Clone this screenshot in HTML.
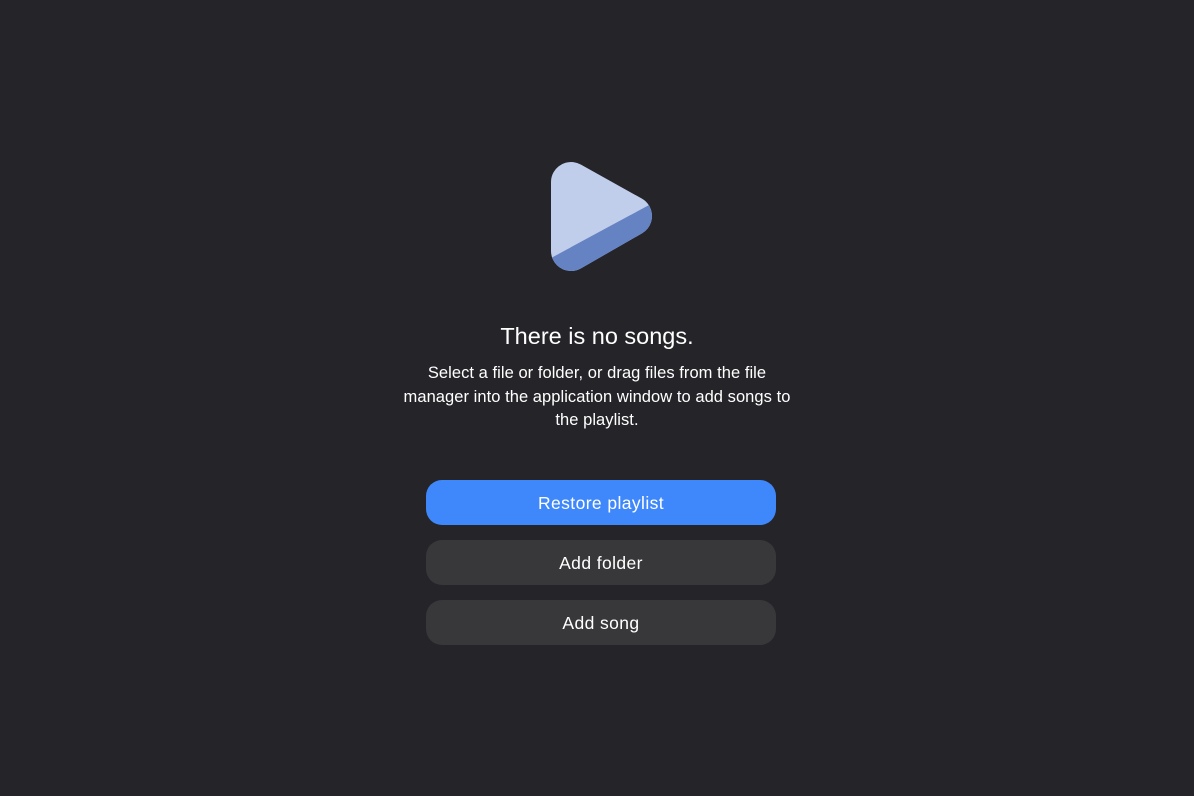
<!DOCTYPE html>
<html><head><meta charset="utf-8"><style>
html,body{margin:0;padding:0;width:1194px;height:796px;overflow:hidden;background:#252429;font-family:"Liberation Sans",sans-serif;color:#fff}
.t{position:absolute;left:0;width:1194px;text-align:center}
.title{top:322px;font-size:23.5px;line-height:28px}
.body{top:362px;font-size:16.5px;line-height:23.5px;letter-spacing:0.05px}
.btn{position:absolute;left:426px;width:350px;height:45px;border-radius:16px;text-align:center;line-height:47px;font-size:17.5px;letter-spacing:0.4px}
</style></head><body>
<svg width="1194" height="796" style="position:absolute;left:0;top:0">
<defs><clipPath id="c"><polygon points="540,264 662,198 700,400 500,400"/></clipPath></defs>
<polygon points="571,182 571,251 632,216" fill="#c0cdeb" stroke="#c0cdeb" stroke-width="40" stroke-linejoin="round"/>
<polygon points="571,182 571,251 632,216" fill="#6583c3" stroke="#6583c3" stroke-width="40" stroke-linejoin="round" clip-path="url(#c)"/>
</svg>
<div class="t title">There is no songs.</div>
<div class="t body">Select a file or folder, or drag files from the file<br>manager into the application window to add songs to<br>the playlist.</div>
<div class="btn" style="top:480px;background:#3f88fb">Restore playlist</div>
<div class="btn" style="top:540px;background:#38383b">Add folder</div>
<div class="btn" style="top:600px;background:#38383b">Add song</div>
</body></html>
